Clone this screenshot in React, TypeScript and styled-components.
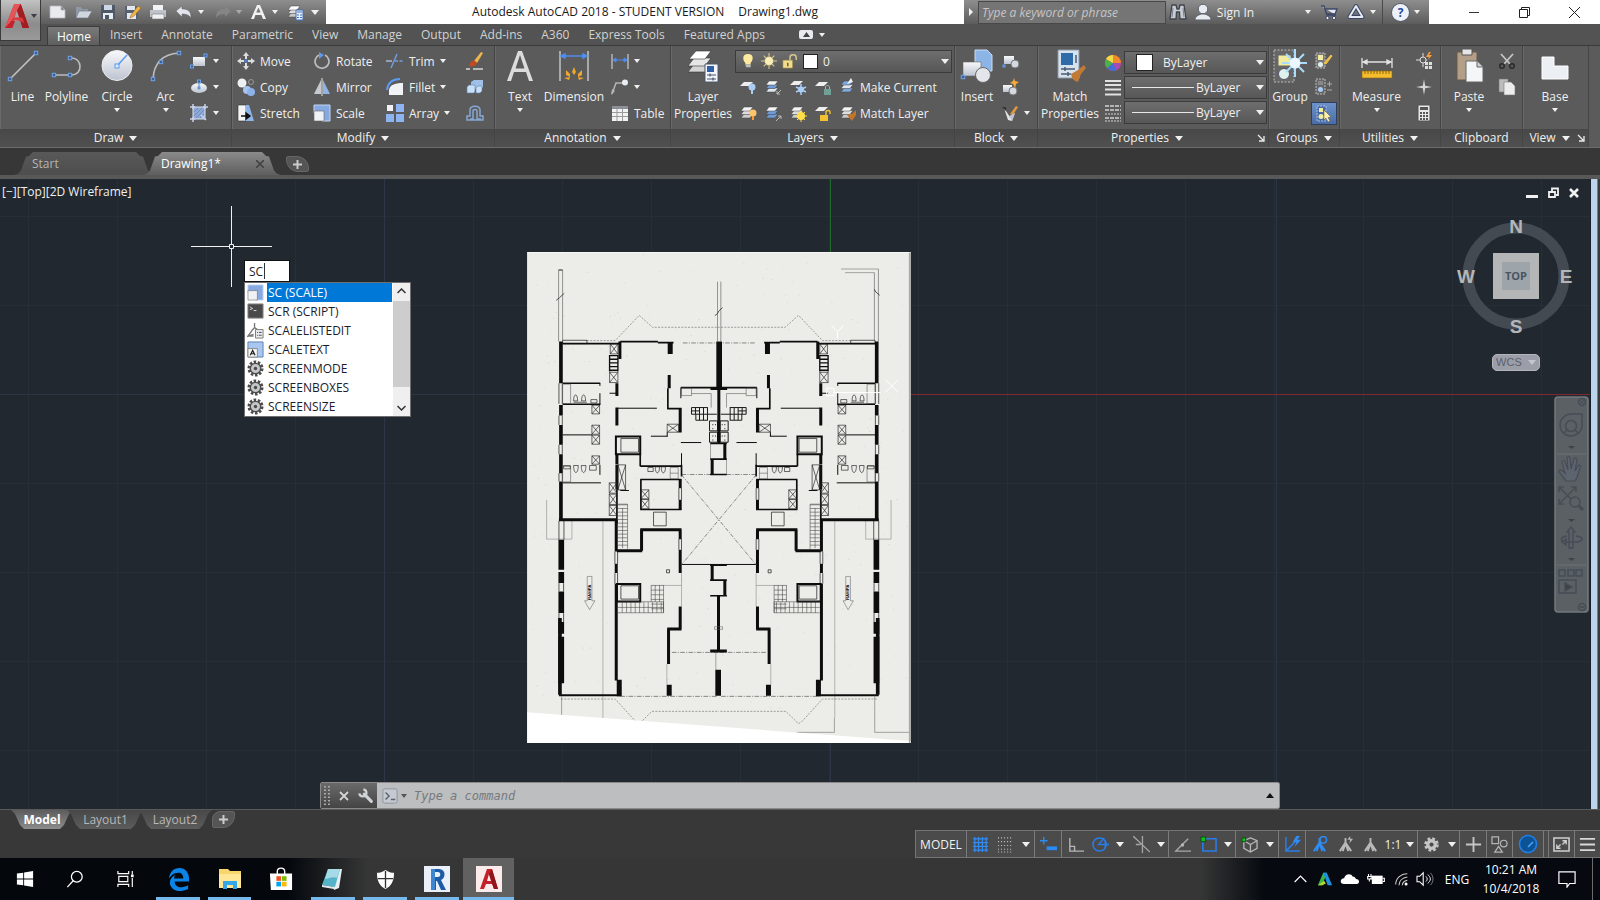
import React from "react";
import styled, { createGlobalStyle, css } from "styled-components";

const ui = `"Open Sans", "Noto Sans", "Segoe UI", sans-serif`;

const Global = createGlobalStyle`
  * { box-sizing: border-box; }
  body { margin: 0; background: #212830; font-family: ${ui}; font-size: 12px; color: #f0f0f0; }
  button, input, select { font: inherit; color: inherit; border: 0; background: none; padding: 0; margin: 0; border-radius: 0; }
  input { min-width: 0; outline: none; }
  svg { display: block; flex: none; }
`;

/* ---------- shared pieces ---------- */

const Caret = styled.span<{ $color?: string; $big?: boolean; $up?: boolean }>`
  width: 0;
  height: 0;
  flex: none;
  border: ${(p) => (p.$big || p.$up ? 4 : 3)}px solid transparent;
  ${(p) =>
    p.$up
      ? css`border-top: 0; border-bottom: 5px solid ${p.$color || "#f0f0f0"};`
      : css`border-bottom: 0; border-top: ${p.$big ? 5 : 4}px solid ${p.$color || "#f0f0f0"};`}
`;

const Page = styled.div`
  min-height: 100vh;
  display: flex;
  flex-direction: column;
  overflow: hidden;
`;
const Defs = styled.svg`
  position: absolute;
`;

type Art = { v: string; d: React.ReactNode };
const S = (v: string, d: React.ReactNode): Art => ({ v, d });

const stack = (a: string, b: string, c: string) => (
  <>
    <path d="M5 10h9l-3 4H2z" fill={c} stroke="#444" strokeWidth=".5" />
    <path d="M5 6.500h9l-3 4H2z" fill={b} stroke="#444" strokeWidth=".5" />
    <path d="M5 3h9l-3 4H2z" fill={a} stroke="#444" strokeWidth=".5" />
  </>
);
const node = (x: number, y: number, s = 3.4) => (
  <rect x={x - s / 2} y={y - s / 2} width={s} height={s} fill="#3f5f8f" stroke="#6fa3ee" />
);
const gear = (fill: string, hole: string) => (
  <>
    <circle cx="9" cy="9" r="7" fill="none" stroke={fill} strokeWidth="3" strokeDasharray="2.700 1.700" />
    <circle cx="9" cy="9" r="5.500" fill={hole} stroke={fill} strokeWidth="1.400" />
    <circle cx="9" cy="9" r="1.800" fill={fill} />
  </>
);
const person = (c: string) => <path d="M9 2v5M9 7L3 16M9 7l6 9M9 8l-3 8M9 8l3 8" stroke={c} strokeWidth="2" fill="none" />;

const art: Record<string, Art> = {
  logo: S("0 0 28 30", <><path d="M1 28L11 2h7l9 26h-7l-2-7-6-1-3 8z" fill="#c4232b" /><path d="M11 2h7l-8 16-9 10z" fill="#e4555a" /><path d="M14 9l4 12-8-1z" fill="#a9a9a9" /><path d="M18 2l9 26h-7L14 9z" fill="#a31c22" /><path d="M8 20c5-1 11 0 14 3l-2-6c-3-1-7-1-10 0z" fill="#d83a40" /></>),
  file: S("0 0 18 18", <path d="M1 3h11l4 4v8H1z M12 3v4h4" fill="#e9ebee" stroke="#b5b8bd" strokeWidth=".8" />),
  open: S("0 0 18 18", <><path d="M2 4h5l1 2h6v3H5l-3 6z" fill="#8f9aa8" /><path d="M5 8h13l-4 7H2z" fill="#d0d6de" stroke="#68707a" strokeWidth=".6" /></>),
  save: S("0 0 18 18", <><path d="M2 2h14v14H2z" fill="#4d5968" /><path d="M5 2h8v5H5z" fill="#cdd6e4" /><path d="M4 10h10v6H4z" fill="#e8edf4" /><path d="M6 12h4v4H6z" fill="#4d5968" /></>),
  saveas: S("0 0 18 18", <><path d="M1 3h13v13H1z" fill="#566272" /><path d="M3 3h8v4H3zM3 10h9v6H3z" fill="#e2e8f1" /><path d="M7 12l7-9 3 2-7 8-4 2z" fill="#f0b64a" stroke="#97601a" strokeWidth=".5" /></>),
  print: S("0 0 18 18", <><path d="M4 2h10v5H4z" fill="#f1f3f6" /><path d="M1 7h16v7H1z" fill="#bfc3c9" /><path d="M3 11h12v5H3z" fill="#eef0f3" stroke="#777" strokeWidth=".6" /></>),
  undo: S("0 0 18 18", <path d="M1 8l6-5v3c6 0 9 2 9 9-2-3-4-4-9-4v3z" fill="#e2e6ec" stroke="#666" strokeWidth=".5" />),
  redo: S("0 0 18 18", <path d="M17 8l-6-5v3c-6 0-9 2-9 9 2-3 4-4 9-4v3z" fill="#858585" />),
  bigA: S("0 0 18 18", <path d="M1 16L7 2h3l6 14h-3l-1.600-4H5.400L4 16zM6.200 9.500h4.400L8.500 4.600z" fill="#f1f1f1" />),
  sheets: S("0 0 18 18", <>{stack("#fff", "#ddd", "#c9c9c9")}<path d="M10 7h7v10h-7z" fill="#e8f0fb" stroke="#4371b5" /><path d="M11 9h5M11 12h2m1 0h2M11 14.500h2m1 0h2" stroke="#4371b5" /></>),
  binoc: S("0 0 18 18", <><path d="M3 2h4l1 4h2l1-4h4l2 14h-6l-.5-7h-3L7 16H1z" fill="#c8ccd3" stroke="#3f444c" strokeWidth="1.300" /><path d="M4 5l-1 9M14 5l1 9" stroke="#7a818d" /></>),
  user: S("0 0 18 18", <><circle cx="9" cy="6" r="4.800" fill="#e8ebf0" stroke="#59606c" /><path d="M1 17c0-4 4-5 6-6h4c2 1 6 2 6 6z" fill="#e8ebf0" stroke="#59606c" /></>),
  cart: S("0 0 18 18", <><path d="M1 3h3l3 9h9M5 6h12l-2 5H6.500z" fill="#e6eaf3" stroke="#3c4768" strokeWidth="1.300" /><circle cx="7.500" cy="15" r="1.600" fill="#fff" stroke="#3c4768" /><circle cx="14" cy="15" r="1.600" fill="#fff" stroke="#3c4768" /></>),
  a360: S("0 0 18 18", <><path d="M9 3l6.500 11h-13z" fill="none" stroke="#3c4768" strokeWidth="4" strokeLinejoin="round" /><path d="M9 3l6.500 11h-13z" fill="none" stroke="#e6eaf3" strokeWidth="2" strokeLinejoin="round" /></>),
  line: S("0 0 34 34", <><path d="M4 30L30 4" stroke="#c3c3c3" strokeWidth="1.600" />{node(4, 30)}{node(30, 4)}</>),
  polyline: S("0 0 34 34", <><path d="M4 26h17c13 0 11-18 0-17" stroke="#bdbdbd" strokeWidth="1.600" fill="none" />{node(4, 26)}{node(20, 26)}{node(20, 9)}</>),
  circle: S("0 0 34 34", <><circle cx="17" cy="16.500" r="15" fill="url(#ball)" stroke="#eceff4" /><path d="M17 17L27 6" stroke="#5b9bf2" strokeWidth="1.500" /><rect x="15" y="15" width="4" height="4" fill="#dfe9f8" stroke="#5b9bf2" /></>),
  arc: S("0 0 34 34", <><path d="M4 30C5 14 14 5 30 4" stroke="#bdbdbd" strokeWidth="1.600" fill="none" />{node(4, 30)}{node(12, 13)}{node(30, 4)}</>),
  rect: S("0 0 18 18", <><path d="M3 5h12v9H3z" fill="url(#ball)" />{node(15.500, 3.500, 3)}{node(2, 14.500, 3)}</>),
  ellipse: S("0 0 18 18", <><ellipse cx="9" cy="10" rx="8" ry="5" fill="url(#ball)" /><path d="M9 10V4" stroke="#4d84d6" />{node(9, 3.500, 3)}{node(9, 10, 2)}</>),
  hatch: S("0 0 18 18", <><path d="M3 3h12v12H3z" fill="#8fa9d6" stroke="#dce4f2" /><path d="M4 8l4-4M4 12l8-8M6 14l8-8M10 14l4-4" stroke="#6f8bbd" /><path d="M0 3h5M3 0v5M13 3h5M15 0v5M0 15h5M3 13v5M11 11l5 5" stroke="#c8d4ea" strokeWidth="1.500" /></>),
  move: S("0 0 18 18", <><path d="M9 0l3 4h-2v3H8V4H6zM9 18l-3-4h2v-3h2v3h2zM0 9l4-3v2h3v2H4v2zM18 9l-4 3v-2h-3V8h3V6z" fill="#dcdcdc" /><rect x="7.500" y="7.500" width="3" height="3" fill="#4d84d6" /></>),
  copy: S("0 0 18 18", <><circle cx="5" cy="5" r="4.500" fill="#eef0f4" /><circle cx="14" cy="4" r="2.500" fill="none" stroke="#999" /><circle cx="10" cy="12" r="4" fill="#a8c5ef" /><circle cx="14" cy="14" r="4" fill="#8db2e8" /></>),
  stretch: S("0 0 18 18", <><path d="M1 1h8v16H1z" fill="#f3f4f6" stroke="#333" strokeWidth=".6" /><path d="M9 1h3l5 16H9z" fill="#8db5e8" /><path d="M4 12h8M9 9l4 3-4 3z" stroke="#111" strokeWidth="1.400" /></>),
  rotate: S("0 0 18 18", <><path d="M12 3a7 7 0 1 1-6 0" fill="none" stroke="#b9bcc1" strokeWidth="1.800" /><path d="M6 0l5 3-5 4z" fill="#5f97ea" /></>),
  mirror: S("0 0 18 18", <><path d="M8 2v14H1z" fill="#c5c9d0" /><path d="M10 2v14h7z" fill="#8fb3e4" /><path d="M9 0v18" stroke="#e8e8e8" /></>),
  scale: S("0 0 18 18", <><path d="M1 1h16v16H9V9H1z" fill="#86a9e0" stroke="#c2d5f3" /><path d="M1 7h10v10H1z" fill="#f0f2f5" stroke="#666" strokeWidth=".6" /></>),
  trim: S("0 0 18 18", <><path d="M0 9h6" stroke="#a9b7cc" strokeWidth="1.500" /><path d="M9 9h9" stroke="#6fa0e8" strokeWidth="1.500" strokeDasharray="3 1.500" /><path d="M5 16L11 2" stroke="#6fa0e8" strokeWidth="1.400" /></>),
  fillet: S("0 0 18 18", <><path d="M3 17V12C4 7 8 5 17 5v12z" fill="#f0f2f5" /><path d="M1 12C2 4 7 1 14 1" fill="none" stroke="#5b9bf2" strokeWidth="2" /></>),
  array: S("0 0 18 18", <><path d="M1 1h6v6H1z" fill="#f0f2f5" /><path d="M10 0h8v8h-8zM0 10h8v8H0zM10 10h8v8h-8z" fill="#8db4f0" /></>),
  brush: S("0 0 18 18", <><path d="M8 9l7-9 2 1-6 10z" fill="#f0b64a" /><path d="M3 14c1-4 3-6 6-5l2 2c-1 3-4 4-8 3z" fill="#c24a20" /><path d="M0 17h4M7 17h10" stroke="#d8d8d8" strokeWidth="1.500" /></>),
  explode: S("0 0 18 18", <><path d="M5 4l3-2h9v7l-2 2H5z" fill="#9fc0e8" /><path d="M1 9l2-2h6v6l-1 2H1zM10 10l2-2h4v5l-2 2h-4z" fill="#c9dff6" stroke="#5b7fae" strokeWidth=".6" /></>),
  offset: S("0 0 18 18", <path d="M1 16h16v-4h-3V6c0-5-10-5-10 0v6H1zM4 15h3V7c0-2 4-2 4 0v8h4" fill="none" stroke="#87a7d3" strokeWidth="1.500" />),
  text: S("0 0 34 34", <path d="M4 32L15 2h4l11 30h-4l-3-9H11l-3 9zM12.500 19.500h9L17 6z" fill="#dcdcdc" />),
  dimension: S("0 0 34 34", <><path d="M3 2v30M31 2v30" stroke="#a9a9a9" strokeWidth="2" /><path d="M4 7h26M4 7l4-2v4zM30 7l-4-2v4z" stroke="#4f8df0" fill="#4f8df0" strokeWidth="1.500" /><path d="M17 18l2 5-2 3-2-3zM9 21l4 4v3l-4-2zM25 21l-4 4v3l4-2zM7 29l6-1-1 3zM27 29l-6-1 1 3z" fill="#f0a62c" /></>),
  dimsmall: S("0 0 18 18", <><path d="M1 2v15M17 2v15" stroke="#b5b5b5" strokeWidth="1.500" /><path d="M2 8h14M2 8l3-2v4zM16 8l-3-2v4z" stroke="#4f8df0" fill="#4f8df0" /></>),
  leader: S("0 0 18 18", <><path d="M1 16l4-11h8" stroke="#b5b5b5" strokeWidth="1.500" fill="none" /><path d="M0 17l1-6 3 2z" fill="#b5b5b5" /><circle cx="14" cy="4.500" r="3" fill="#e9edf4" /></>),
  table: S("0 0 18 18", <><path d="M1 2h16v15H1z" fill="#f2f2f2" /><path d="M1 2h16v3H1z" fill="#8d9096" /><path d="M1 8.500h16M1 12.500h16M6 5v12M11.500 5v12" stroke="#9a9a9a" /></>),
  layerprops: S("0 0 34 34", <><path d="M8 15h17l-6 8H2z" fill="#d4d4d4" stroke="#333" strokeWidth=".6" /><path d="M8 9h17l-6 8H2z" fill="#e6e6e6" stroke="#333" strokeWidth=".6" /><path d="M10 2h15l-6 8H3z" fill="#fff" stroke="#333" strokeWidth=".6" /><path d="M19 15h13v18H19z" fill="#f4f6f9" stroke="#4c5a70" /><path d="M21 17h7v6h-7z" fill="#2f5fa8" /><path d="M21 26h9M21 30h9M24 24.500v3M27 28.500v3" stroke="#44546e" strokeWidth="1.200" /></>),
  bulb: S("0 0 18 18", <><path d="M9 1c7 0 6 7 3 10v2H6v-2C3 8 2 1 9 1z" fill="#ffe9a0" /><path d="M6 13h6v3H7z" fill="#bdbdbd" /></>),
  sun: S("0 0 18 18", <><path d="M9 0v18M0 9h18M3 3l12 12M15 3L3 15" stroke="#d9c98e" strokeWidth="1.200" /><circle cx="9" cy="9" r="5" fill="#fbeeb8" stroke="#8b805c" strokeWidth=".6" /></>),
  lock: S("0 0 18 18", <><path d="M1 8h11v9H1z" fill="#f0dc8e" stroke="#8a7733" strokeWidth=".6" /><path d="M9 8V5c0-4 7-4 7 0v3" fill="none" stroke="#d9c98e" strokeWidth="1.600" /><path d="M6.500 11v4" stroke="#5d5020" strokeWidth="1.500" /></>),
  l1: S("0 0 18 18", <><path d="M5 4h9l-4 4H1z" fill="#eee" /><circle cx="13" cy="9" r="3.500" fill="#a9cdf5" /><path d="M13 12v4" stroke="#a9cdf5" strokeWidth="2" /></>),
  l2: S("0 0 18 18", <>{stack("#f4f4f4", "#6f9ad6", "#dfe5ee")}<path d="M17 12l-4 4M13 13v3h3" stroke="#bbb" fill="none" /></>),
  l3: S("0 0 18 18", <><path d="M5 3h9l-4 4H1z" fill="#eee" /><path d="M12 6v11M7 9l10 5M17 9L7 14" stroke="#a9cdf5" strokeWidth="1.500" /><circle cx="12" cy="11.500" r="3" fill="#a9cdf5" /></>),
  l4: S("0 0 18 18", <><path d="M5 4h9l-4 4H1z" fill="#eee" /><path d="M10 11h7v6h-7z" fill="#6f9f95" /><path d="M11.500 11V9c0-2 4-2 4 0v2" fill="none" stroke="#9dbab4" /></>),
  l5: S("0 0 18 18", <>{stack("#7fa8df", "#dfe5ee", "#7fa8df")}<path d="M12 0l2 4-6 2z" fill="#eef3fa" /></>),
  l6: S("0 0 18 18", <>{stack("#f4f4f4", "#ddd", "#ccc")}<circle cx="14" cy="9" r="3.500" fill="#ffc56a" /><path d="M14 12v4" stroke="#ff9a2e" strokeWidth="2" /></>),
  l7: S("0 0 18 18", <>{stack("#f4f4f4", "#6f9ad6", "#6f9ad6")}<path d="M12 17l5-5M14 12h3v3" stroke="#bbb" fill="none" /></>),
  l8: S("0 0 18 18", <>{stack("#f4f4f4", "#ddd", "#ccc")}<circle cx="12" cy="12" r="4" fill="#ffdf4a" /><path d="M12 6v12M6 12h12M8 8l8 8M16 8l-8 8" stroke="#ffdf4a" /></>),
  l9: S("0 0 18 18", <><path d="M5 3h9l-4 4H1z" fill="#eee" /><path d="M6 11h8v6H6z" fill="#f2c230" /><path d="M12 11V8c0-2 4-2 4 0v2" fill="none" stroke="#f2c230" strokeWidth="1.400" /></>),
  l10: S("0 0 18 18", <>{stack("#f4f4f4", "#ddd", "#ccc")}<path d="M8 11l5-1 4-4v5l-4 6z" fill="#c47427" /></>),
  insert: S("0 0 34 34", <><path d="M15 1h12l5 5v16H15z" fill="#8db4e6" stroke="#c8dcf5" /><path d="M3 13h18v14H3z" fill="url(#ball)" stroke="#666" strokeWidth=".6" /><circle cx="23" cy="26" r="7.500" fill="#e2e5ea" stroke="#666" />{node(3, 28)}</>),
  b1: S("0 0 18 18", <><path d="M3 4h10v8H3z" fill="url(#ball)" /><circle cx="14" cy="12" r="4" fill="#d4d8df" stroke="#777" />{node(3, 14, 2)}</>),
  b2: S("0 0 18 18", <><path d="M2 7h9v7H2z" fill="url(#ball)" /><circle cx="12" cy="13" r="4" fill="#d4d8df" stroke="#777" /><path d="M13 0l1 3 4 1-3 2-1 4-2-4-3-1 3-2z" fill="#f7a93b" /></>),
  b3: S("0 0 18 18", <><path d="M3 4l6 9 5-4-3 8-4-1z" fill="#e4e6ea" /><path d="M1 3h4v4z" fill="#333" /><path d="M9 10l6-8 2 1-5 8z" fill="#e09a3c" /><path d="M8 12l6-3-3 8z" fill="#bfc3c9" /></>),
  match: S("0 0 34 34", <><path d="M5 1h21v28H5z" fill="#d7e2ef" stroke="#8b97a6" /><path d="M8 4h12v12H8z" fill="#2f6ba8" /><path d="M8 20h14M8 25h10M12 18v4M15 23v4M23 6v8" stroke="#4b5b70" strokeWidth="1.500" /><path d="M18 25l7-4 6-5 2 3-5 6-3 8c-4-1-6-3-7-8z" fill="#c07a35" /></>),
  wheel: S("0 0 18 18", <><circle cx="9" cy="9" r="8" fill="#d44" /><path d="M9 9V1a8 8 0 0 1 8 8z" fill="#f08a2c" /><path d="M9 9h8a8 8 0 0 1-5 7.400z" fill="#a44bb5" /><path d="M9 9l3 7.400A8 8 0 0 1 3 14z" fill="#3e6fd9" /><path d="M9 9l-6 5A8 8 0 0 1 2 5z" fill="#46b34b" /><path d="M9 9L2 5a8 8 0 0 1 7-4z" fill="#f0dc4a" /></>),
  weights: S("0 0 18 18", <path d="M1 2h16M1 6h16M1 10.500h16M1 15.500h16" stroke="#e2e2e2" strokeWidth="2.200" />),
  types: S("0 0 18 18", <><path d="M1 2h16M1 6h16M1 14h16" stroke="#d2d2d2" strokeWidth="1.500" strokeDasharray="4 1" /><path d="M1 10h16M1 17h16" stroke="#d2d2d2" strokeDasharray="2 1" /></>),
  group: S("0 0 34 34", <><path d="M1 1h20v32H1z" fill="#666" stroke="#bbb" strokeDasharray="2 1.500" /><path d="M5 6h13v11H5z" fill="#f1eca0" stroke="#666" /><circle cx="11" cy="25" r="5.500" fill="#dff0ee" stroke="#556" /><path d="M22 0v28M9 14h25M13 5l18 18M31 5L13 23" stroke="#a9dcff" strokeWidth="2" /><circle cx="22" cy="14" r="5.500" fill="#eaf7ff" /></>),
  g1: S("0 0 18 18", <><path d="M1 1h9v15H1z" fill="#777" stroke="#bbb" strokeDasharray="2 1" /><path d="M3 3h5v5H3z" fill="#f1eca0" /><circle cx="5.500" cy="12.500" r="2.500" fill="#dff0ee" /><path d="M9 11l7-8 1 1-6 8z" fill="#f0c04a" stroke="#f0c04a" /></>),
  g2: S("0 0 18 18", <><path d="M1 1h9v15H1z" fill="#666" stroke="#bbb" strokeDasharray="2 1" /><path d="M3 3h5v4H3z" fill="#888" /><circle cx="5.500" cy="11.500" r="2.500" fill="#a9cdf5" /><path d="M12 6h5M14.500 3.500v5M12 12h5" stroke="#aaa" /></>),
  g3: S("0 0 18 18", <><path d="M2 1h9v15H2z" fill="#4b6ba5" stroke="#a9c1ea" strokeDasharray="2 1" /><path d="M4 3h4v4H4z" fill="#f1eca0" /><circle cx="6" cy="11.500" r="2.500" fill="#f1eca0" /><path d="M9 5l7 7-3 .5 2 3.500-2 1-2-4-2 2z" fill="#fff2a8" stroke="#555" strokeWidth=".5" /></>),
  measure: S("0 0 34 34", <><path d="M2 9v10M32 9v10M3 13h28M3 13l4-2v4zM31 13l-4-2v4z" stroke="#e2e2e2" strokeWidth="1.300" fill="#e2e2e2" /><path d="M2 22h30v7H2z" fill="#f5bd2d" stroke="#8d6712" strokeWidth=".6" /><path d="M5 22v3M8 22v3M11 22v3M14 22v3M17 22v3M20 22v3M23 22v3M26 22v3M29 22v3" stroke="#8d6712" /></>),
  u1: S("0 0 18 18", <><circle cx="8" cy="8" r="3" fill="none" stroke="#ddd" /><path d="M8 1v4M1 8h4M8 11v4M11 8h1" stroke="#ddd" /><path d="M10 10h7v7h-7z" fill="#ddd" /><path d="M10 13.500h7M13.500 10v7" stroke="#666" /><path d="M14 0l-3 5h3l-1 3 4-5h-3l2-3z" fill="#ff9b3a" /></>),
  u2: S("0 0 18 18", <path d="M9 1l1.200 6.800L17 9l-6.800 1.200L9 17l-1.200-6.800L1 9l6.800-1.200z" fill="#d5d5d5" />),
  u3: S("0 0 18 18", <><path d="M3 1h12v16H3z" fill="#e8e8e8" stroke="#555" /><path d="M5 3h8v3H5z" fill="#555" /><path d="M5 9h8M5 12h8M5 15h8" stroke="#555" strokeWidth="2" strokeDasharray="2 1" /></>),
  paste: S("0 0 34 34", <><path d="M5 3h20v28H5z" fill="#b39f88" stroke="#6a5a46" /><path d="M10 0h10v6H10z" fill="#e6e6e6" stroke="#555" /><path d="M14 12h11l6 6v15H14z" fill="#f4f6f8" stroke="#666" /><path d="M25 12v6h6" fill="#d0d0d0" stroke="#666" /></>),
  cut: S("0 0 18 18", <><path d="M3 2l9 10M15 2L6 12" stroke="#c5c5c5" strokeWidth="1.800" /><circle cx="4" cy="14" r="2.300" fill="none" stroke="#2a2a2a" strokeWidth="1.500" /><circle cx="14" cy="14" r="2.300" fill="none" stroke="#2a2a2a" strokeWidth="1.500" /></>),
  clip: S("0 0 18 18", <><path d="M1 1h9v13H1z" fill="#bcbcbc" stroke="#777" strokeWidth=".6" /><path d="M6 4h7l4 4v9H6z" fill="#ededed" stroke="#777" strokeWidth=".6" /></>),
  base: S("0 0 34 34", <path d="M4 8h12v9h14v13H4z" fill="#eceff3" stroke="#fff" />),
  script: S("0 0 18 18", <><path d="M1 1h16v15H1z" fill="#4a4a4a" stroke="#888" /><path d="M3 4l3 2-3 1M7 8h3" stroke="#ddd" fill="none" /></>),
  listedit: S("0 0 18 18", <><path d="M8 1v5M8 6L5 9M8 6l3 2M6 8L1 15l6-2M1 15h6" stroke="#777" strokeWidth="1.400" fill="none" /><path d="M9 8h8v9H9z" fill="#eee" stroke="#777" /><path d="M10.500 11h1M12.500 11h3M10.500 14h1M12.500 14h3" stroke="#345" /></>),
  scaletext: S("0 0 18 18", <><path d="M1 1h16v16H1z" fill="#a9c6ee" stroke="#5a7fb3" /><path d="M1 8h10v9H1z" fill="#f4f4f4" stroke="#888" /><path d="M3.500 15L6 10l2.500 5M4.500 13.500h3" stroke="#222" strokeWidth="1.300" fill="none" /></>),
  geardark: S("0 0 18 18", gear("#4c4c4c", "#c4c6c9")),
  gearlight: S("0 0 18 18", <><circle cx="9" cy="9" r="6.200" fill="none" stroke="#c4c4c4" strokeWidth="3" strokeDasharray="2.900 1.970" /><circle cx="9" cy="9" r="4" fill="none" stroke="#c4c4c4" strokeWidth="3.500" /></>),
  stGrid: S("0 0 18 18", <path d="M3 1v16M7 1v16M11 1v16M15 1v16M1 3h16M1 7h16M1 11h16M1 15h16" stroke="#2f8cf5" strokeWidth="1.300" />),
  stDots: S("0 0 18 18", <path d="M1 2h16M1 6h16M1 10h16M1 14h16M1 17h16" stroke="#b9b9b9" strokeWidth="1.200" strokeDasharray="1.200 2" />),
  stDyn: S("0 0 18 18", <><path d="M4 1v8M0 5h8" stroke="#2a8bf5" strokeWidth="1.500" /><path d="M7 11h11v4H7z" fill="#2a8bf5" /></>),
  stOrtho: S("0 0 18 18", <path d="M3 2v14h15M3 11h5v5" stroke="#b5b5b5" strokeWidth="1.500" fill="none" />),
  stPolar: S("0 0 18 18", <><circle cx="8" cy="9" r="7" fill="none" stroke="#2a7de8" strokeWidth="1.600" /><path d="M18 9H7l6-7M14 5v8" stroke="#2a7de8" fill="none" strokeWidth="1.500" /></>),
  stIso: S("0 0 18 18", <path d="M0 0l18 17M10 0v18M3 9h5" stroke="#a5a5a5" strokeWidth="1.400" />),
  stAngle: S("0 0 18 18", <><path d="M15 3L2 16h16" stroke="#a9a9a9" strokeWidth="1.500" fill="none" /><circle cx="9" cy="9.500" r="1.800" fill="#b5b5b5" /></>),
  stSnap: S("0 0 18 18", <><path d="M3 3h14v13H3z" stroke="#2a7de8" strokeWidth="1.600" fill="none" /><path d="M1 1h5v5H1z" fill="#10c01a" stroke="#0a4a10" /></>),
  stCube: S("0 0 18 18", <><path d="M10 2l7 3v8l-7 4-7-4V5zM3 5l7 4 7-4M10 9v8" stroke="#b5b5b5" strokeWidth="1.400" fill="none" /><path d="M1 2h4v4H1z" fill="#10c01a" stroke="#0a4a10" /></>),
  stUcs: S("0 0 18 18", <><path d="M2 1v15h15M2 16L11 7" stroke="#2a7de8" strokeWidth="1.600" fill="none" /><path d="M13 0l-4 7h4l-2 5 7-8h-4l3-4z" fill="#2f8cf5" /></>),
  stAnno1: S("0 0 18 18", <>{person("#2f8cf5")}<circle cx="13" cy="4" r="3.500" fill="none" stroke="#2f8cf5" strokeWidth="1.500" /></>),
  stAnno2: S("0 0 18 18", <>{person("#b9b9b9")}<path d="M14 0l-3 4h3l-1 4 4-5h-3z" fill="#b9b9b9" /></>),
  stAnno3: S("0 0 18 18", person("#b9b9b9")),
  stPlus: S("0 0 18 18", <path d="M9 1v16M1 9h16" stroke="#c5c5c5" strokeWidth="2" />),
  stShapes: S("0 0 18 18", <><path d="M1 1h7v7H1zM8 11l4 6H4z" fill="none" stroke="#b5b5b5" strokeWidth="1.300" /><circle cx="13.500" cy="8" r="3.500" fill="none" stroke="#b5b5b5" strokeWidth="1.300" /></>),
  stPerf: S("0 0 20 20", <><circle cx="10" cy="10" r="8.500" fill="#0b5394" stroke="#1f7fe8" strokeWidth="1.600" /><path d="M10 13l5-5" stroke="#49a6ff" strokeWidth="1.600" /></>),
  stFull: S("0 0 18 18", <><path d="M1 2h16v14H1z" fill="none" stroke="#d0d0d0" strokeWidth="1.600" /><path d="M10 5h4v4M14 5l-4 4M8 13H4V9M4 13l4-4" stroke="#d0d0d0" strokeWidth="1.400" fill="none" /></>),
  stMenu: S("0 0 18 18", <path d="M1 3h16M1 9h16M1 15h16" stroke="#d8d8d8" strokeWidth="2" />),
  wrench: S("0 0 18 18", <><path d="M7 7l8 8" stroke="#cfd2d6" strokeWidth="3.500" strokeLinecap="round" /><path d="M6 1.500A4 4 0 1 1 1.500 6" stroke="#cfd2d6" strokeWidth="2.600" fill="none" /></>),
  prompt: S("0 0 18 18", <><rect x="1" y="1" width="16" height="16" rx="2" fill="#c5cad1" stroke="#8790a0" /><path d="M4 5l4 4-4 4M10 13h5" stroke="#5a6474" strokeWidth="1.600" fill="none" /></>),
  win: S("0 0 20 20", <path d="M1 4l7-1v6.500H1zM9 2.800L19 1v8.500H9zM1 10.500h7V17l-7-1zM9 10.500h10V19l-10-1.800z" fill="#fff" />),
  search: S("0 0 20 20", <><circle cx="12" cy="7.500" r="6" fill="none" stroke="#fff" strokeWidth="1.400" /><path d="M8 12l-6.500 7" stroke="#fff" strokeWidth="1.400" /></>),
  tasks: S("0 0 20 20", <><path d="M1 1v3h12V1M1 19v-3h12v3M2 7h10v6H2zM17 1v4M17 9v10" fill="none" stroke="#fff" strokeWidth="1.300" /><path d="M15.500 5h3v3h-3z" fill="#fff" /></>),
  edge: S("0 0 24 24", <path d="M2 11C3 4 7 0 13 0c6 0 10 5 10 11v3H8c0 4 3 6 7 6 3 0 5-1 7-2v4c-2 1-5 2-8 2C7 24 3 20 3 15c0-3 2-6 6-8-1 1-1.500 2-1.500 4H17c0-4-2-6-5-6-5 0-8 3-10 6z" fill="#0b84e8" />),
  folder: S("0 0 24 24", <><path d="M1 2h9l2 2h11v17H1z" fill="#f9d66b" /><path d="M1 7h22v14H1z" fill="#ffe797" /><path d="M5 22v-8h14v8h-4v-4H9v4z" fill="#35a7e8" /></>),
  store: S("0 0 24 26", <><path d="M8 8V5c0-5 8-5 8 0v3" fill="none" stroke="#fff" strokeWidth="1.500" /><path d="M0 7h24v18H1z" fill="#fff" /><path d="M7 10h5v5H7z" fill="#f25022" /><path d="M13 10h5v5h-5z" fill="#7fba00" /><path d="M7 16h5v5H7z" fill="#00a4ef" /><path d="M13 16h5v5h-5z" fill="#ffb900" /></>),
  notepad: S("0 0 24 24", <><path d="M8 2l13 0-3 19-5 2z" fill="#e5eef2" /><path d="M7 2h12l-5 18L1 18z" fill="#55b3c9" /><path d="M7 2h12l-3 9C11 9 8 12 4 12z" fill="#a5dbe6" /><path d="M1 18l13 2-1 2-12-2z" fill="#dfe8ea" /></>),
  shield: S("0 0 20 20", <><path d="M10 0c3 2 6 3 9 3 0 9-3 14-9 17C4 17 1 12 1 3c3 0 6-1 9-3z" fill="#fff" /><path d="M10 1v18M2 9h16" stroke="#333" strokeWidth="1.400" /></>),
  revit: S("0 0 26 26", <><path d="M0 0h26v26H0z" fill="#e9f0f9" /><path d="M7 3h8c7 0 7 9 2 11l5 10h-5l-4-9h-1v9H7z" fill="#1c5ba8" /><path d="M11 6h3c3 0 3 5 0 5h-3z" fill="#e9f0f9" /><path d="M7 3h4v21H7z" fill="#3c86cf" /></>),
  acad: S("0 0 26 26", <><path d="M0 0h26v26H0z" fill="#fbeceb" /><path d="M4 23L11 3h5l6 20h-4l-2-5h-6l-2 5z" fill="#c4202a" /><path d="M13 8l2 7h-4z" fill="#fbeceb" /><path d="M16 3l6 20h-4L13 8z" fill="#8f151c" /></>),
  autodesk: S("0 0 18 18", <><path d="M1 16L7 2h4L6 16z" fill="#39b54a" /><path d="M7 2h4l6 14h-5z" fill="#1f8fe0" /><path d="M1 16l7-5 2 3-4 2z" fill="#b7d433" /></>),
  cloud: S("0 0 24 18", <path d="M5 15c-6 0-5-7 0-7 1-6 9-6 10-2 3 0 4 2 4 3 5 0 5 6 1 6z" fill="#fff" />),
  battery: S("0 0 24 18", <><path d="M7 5h13v10H7z" fill="#fff" /><path d="M5 8h1M20 8h2v4h-2M3 3v3M6 3v3M2 6h5v3H2zM4 9v3" stroke="#fff" strokeWidth="1.300" fill="none" /></>),
  wifi: S("0 0 18 18", <><path d="M2 15C2 8 8 2 16 2M6 16c0-5 4-9 10-10M10 16c0-3 2-5 6-6" stroke="#ccc" strokeWidth="1.300" fill="none" /><circle cx="14.500" cy="14.500" r="1.800" fill="#fff" /></>),
  volume: S("0 0 20 18", <><path d="M1 6h3l4-4v14l-4-4H1z" fill="none" stroke="#fff" strokeWidth="1.200" /><path d="M11 6c2 2 2 4 0 6M13 4c4 3 4 7 0 10" stroke="#fff" fill="none" /><path d="M16 2c4 4 4 10 0 14" stroke="#888" fill="none" /></>),
  note: S("0 0 20 20", <path d="M1 2h18v13h-6l-3 4v-4H1z" fill="none" stroke="#fff" strokeWidth="1.300" />),
  chev: S("0 0 18 18", <path d="M2 12l7-7 7 7" fill="none" stroke="#fff" strokeWidth="1.400" />),
};

function Ico({ n, s = 18, h }: { n: string; s?: number; h?: number }) {
  const a = art[n];
  return (
    <svg width={s} height={h || s} viewBox={a.v} aria-hidden="true">
      {a.d}
    </svg>
  );
}

/* ---------- title bar and ribbon tabs ---------- */

const Header = styled.header`
  display: flex;
  background: #535353;
`;
const AppButton = styled.button`
  width: 41px;
  height: 41px;
  flex: none;
  display: flex;
  align-items: center;
  gap: 1px;
  padding: 0 2px 8px 3px;
  background: linear-gradient(#c2c2c2, #8c8c8c 60%, #9a9a9a);
  border: 1px solid #3a3a3a;
  border-top: 0;
`;
const HeaderMain = styled.div`
  flex: 1;
  min-width: 0;
`;
const TitleBar = styled.div`
  height: 24px;
  display: flex;
  background: #fff;
`;
const barGradient = css`
  background: linear-gradient(#8e8e8e, #5c5c5c);
`;
const QuickAccess = styled.div`
  ${barGradient}
  width: 285px;
  flex: none;
  display: flex;
  align-items: center;
  padding-left: 8px;
`;
const QuickButton = styled.button<{ $w: number }>`
  width: ${(p) => p.$w}px;
  height: 24px;
  display: flex;
  align-items: center;
  flex: none;
`;
const WindowTitle = styled.h1`
  flex: 1;
  margin: 0;
  display: flex;
  justify-content: center;
  gap: 14px;
  font-size: 12px;
  line-height: 24px;
  font-weight: 400;
  color: #1a1a1a;
  white-space: nowrap;
`;
const InfoCenter = styled.div`
  ${barGradient}
  width: 465px;
  flex: none;
  display: flex;
  align-items: center;
  padding-left: 5px;
`;
const RightArrow = styled.span`
  border: 4px solid transparent;
  border-right: 0;
  border-left-color: #f2f2f2;
  margin-right: 5px;
`;
const SearchBox = styled.input`
  width: 188px;
  flex: none;
  height: 23px;
  && { padding: 0 3px; background: #757575; border: 1px solid #484848; }
  font-style: italic;
  &::placeholder { color: #c6c6c6; opacity: 1; }
`;
const InfoButton = styled.button<{ $w: number; $line?: boolean; $push?: boolean }>`
  width: ${(p) => p.$w}px;
  height: 24px;
  display: flex;
  flex: none;
  align-items: center;
  justify-content: center;
  gap: 5px;
  white-space: nowrap;
  margin-left: ${(p) => (p.$push ? "auto" : "0")};
  border-left: ${(p) => (p.$line ? "1px solid #4a4a4a" : "0")};
`;
const HelpMark = styled.span`
  width: 17px;
  height: 17px;
  line-height: 17px;
  border-radius: 50%;
  background: #eef2f8;
  color: #1f49a0;
  font-weight: 700;
  text-align: center;
  box-shadow: 0 0 0 1px #596273;
`;
const WindowButtons = styled.div`
  width: 171px;
  flex: none;
  display: flex;
  justify-content: space-around;
  align-items: center;
  padding-left: 20px;
  button { width: 40px; height: 24px; display: flex; align-items: center; justify-content: center; }
`;
const Tabs = styled.nav`
  display: flex;
  height: 21px;
  padding-left: 6px;
`;
const Tab = styled.button<{ $on?: boolean }>`
  padding: 0 ${(p) => (p.$on ? 8 : 10)}px 0 9px;
  margin-right: ${(p) => (p.$on ? 1 : 0)}px;
  margin-top: ${(p) => (p.$on ? 2 : 0)}px;
  line-height: ${(p) => (p.$on ? 17 : 21)}px;
  color: ${(p) => (p.$on ? "#fff" : "#d2d2d2")};
  white-space: nowrap;
  ${(p) =>
    p.$on &&
    css`
      background: linear-gradient(#7a7a7a, #5e5e5e);
      border: 1px solid #3c3c3c;
      border-bottom: 0;
      border-radius: 2px 2px 0 0;
    `}
`;
const RibbonToggle = styled.button`
  display: flex;
  align-items: center;
  gap: 6px;
  margin-left: 24px;
  span:first-child {
    width: 14px;
    height: 9px;
    border-radius: 2px;
    background: #e8eaee;
    display: flex;
    align-items: center;
    justify-content: center;
  }
  svg { margin: 0; }
`;

/* ---------- ribbon ---------- */

const Ribbon = styled.section`
  display: flex;
  height: 103px;
  background: #5b5b5b;
  border-top: 1px solid #3a3a3a;
  border-bottom: 1px solid #6b6b6b;
  overflow: hidden;
`;
const Panel = styled.section<{ $w: number }>`
  width: ${(p) => p.$w}px;
  flex: none;
  display: flex;
  flex-direction: column;
  border-right: 1px solid #454545;
  box-shadow: inset 1px 0 0 #696969;
`;
const PanelBody = styled.div<{ $pl: number }>`
  height: 83px;
  display: flex;
  padding: 2px 0 0 ${(p) => p.$pl}px;
`;
const PanelTitle = styled.button<{ $launch?: boolean }>`
  flex: 1;
  display: flex;
  align-items: center;
  justify-content: center;
  gap: 6px;
  line-height: 18px;
  && {
    background: linear-gradient(#484848, #505050);
    padding-right: ${(p) => (p.$launch ? 12 : 0)}px;
  }
  position: relative;
`;
const Launcher = styled.svg`
  position: absolute;
  right: 3px;
  top: 5px;
`;
const Big = styled.button<{ $w: number }>`
  width: ${(p) => p.$w}px;
  flex: none;
  display: flex;
  flex-direction: column;
  align-items: center;
  line-height: 17px;
  white-space: nowrap;
  svg { margin: 1px 0 5px; }
  ${Caret} { margin-top: 3px; }
`;
const Col = styled.div<{ $w?: number; $ml?: number; $mt?: number; $center?: boolean }>`
  width: ${(p) => (p.$w ? p.$w + "px" : "auto")};
  margin: ${(p) => p.$mt || 0}px 0 0 ${(p) => p.$ml || 0}px;
  flex: none;
  display: flex;
  flex-direction: column;
  align-items: ${(p) => (p.$center ? "center" : "flex-start")};
`;
const Small = styled.button<{ $on?: boolean }>`
  height: 26px;
  display: flex;
  align-items: center;
  gap: 5px;
  white-space: nowrap;
  ${(p) =>
    p.$on &&
    css`
      height: 23px;
      margin-top: 2px;
      padding: 0 3px;
      background: linear-gradient(#6d92c9, #4a6ca6);
      border: 1px solid #2f3f5c;
    `}
`;
const Row = styled.div`
  display: flex;
  align-items: center;
  height: 26px;
`;
const LayerTool = styled.button`
  width: 25px;
  height: 26px;
  display: flex;
  align-items: center;
  justify-content: center;
`;
const PropRow = styled.label`
  display: flex;
  align-items: center;
  gap: 2px;
  height: 25px;
`;
const Combo = styled.div<{ $w: number; $pl: number; $gap: number }>`
  width: ${(p) => p.$w}px;
  height: 23px;
  display: flex;
  align-items: center;
  gap: ${(p) => p.$gap}px;
  padding: 0 2px 0 ${(p) => p.$pl}px;
  background: linear-gradient(#6e6e6e, #575757);
  border: 1px solid #3b3b3b;
  select {
    flex: 1;
    min-width: 0;
    height: 21px;
    appearance: none;
    outline: none;
    option { background: #575757; }
  }
`;
const Swatch = styled.span<{ $s: number }>`
  width: ${(p) => p.$s}px;
  height: ${(p) => p.$s}px;
  background: #fff;
  border: 1px solid #222;
  flex: none;
`;
const LineSample = styled.span`
  width: 62px;
  height: 1px;
  background: #e8e8e8;
  flex: none;
`;

function BigButton({ n, label, w, arrow }: { n: string; label: string; w: number; arrow?: boolean }) {
  return (
    <Big $w={w}>
      <Ico n={n} s={34} />
      {label.split("|").map((t) => (
        <span key={t}>{t}</span>
      ))}
      {arrow && <Caret />}
    </Big>
  );
}
function SmallButton({ n, label, arrow, on }: { n: string; label?: string; arrow?: boolean; on?: boolean }) {
  return (
    <Small $on={on} aria-label={label || n} aria-pressed={on}>
      <Ico n={n} />
      {label}
      {arrow && <Caret />}
    </Small>
  );
}
function RibbonPanel(p: { w: number; pl: number; title: string; arrow?: boolean; launch?: boolean; children: React.ReactNode }) {
  return (
    <Panel $w={p.w}>
      <PanelBody $pl={p.pl}>{p.children}</PanelBody>
      <PanelTitle $launch={p.launch}>
        {p.title}
        {p.arrow !== false && <Caret $big />}
        {p.launch && (
          <Launcher width="8" height="8" viewBox="0 0 8 8">
            <path d="M1 1l5 5M7 2v5H2" stroke="#eee" strokeWidth="1.300" fill="none" />
          </Launcher>
        )}
      </PanelTitle>
    </Panel>
  );
}

/* ---------- file tabs ---------- */

const FileTabs = styled.nav`
  height: 31px;
  display: flex;
  align-items: flex-end;
  padding-left: 14px;
  background: #373737;
  border-bottom: 4px solid #585858;
`;
const FileTab = styled.div<{ $w: number; $on?: boolean }>`
  width: ${(p) => p.$w}px;
  height: 23px;
  margin-right: -12px;
  padding: 0 17px 0 18px;
  display: flex;
  align-items: center;
  justify-content: space-between;
  color: ${(p) => (p.$on ? "#fff" : "#b4b4b4")};
  background: ${(p) => (p.$on ? "linear-gradient(#8a8a8a, #5e5e5e)" : "linear-gradient(#595959, #4d4d4d)")};
  clip-path: polygon(0 100%, 4px 95%, 7px 80%, 12px 20%, 15px 4px, 19px 0, calc(100% - 19px) 0, calc(100% - 15px) 4px, calc(100% - 12px) 20%, calc(100% - 7px) 80%, calc(100% - 4px) 95%, 100% 100%);
`;
const AddTab = styled.button<{ $flip?: boolean }>`
  && {
    width: 23px;
    height: ${(p) => (p.$flip ? 17 : 16)}px;
    margin: ${(p) => (p.$flip ? "1px 0 0 6px" : "0 0 3px 17px")};
    border-radius: ${(p) => (p.$flip ? "8px 2px 12px 2px" : "2px 12px 2px 12px")};
    background: #555;
    border: 1px solid #666;
  }
  display: flex;
  align-items: center;
  justify-content: center;
`;
const Plus = () => (
  <svg width="9" height="9" viewBox="0 0 9 9">
    <path d="M4.500 0v9M0 4.500h9" stroke="#ccc" strokeWidth="2" />
  </svg>
);

/* ---------- model space ---------- */

const Space = styled.main`
  flex: 1;
  min-height: 630px;
  position: relative;
  overflow: hidden;
  background-color: #212830;
  background-image: linear-gradient(90deg, #2d3648 1px, transparent 1px), linear-gradient(#2d3545 1px, transparent 1px),
    linear-gradient(90deg, #262e38 1px, transparent 1px), linear-gradient(#262e38 1px, transparent 1px);
  background-size: 446px 100%, 100% 446px, 89px 89px, 89px 89px;
  background-position: 384px 0, 0 215px, 28px 0, 0 37px;
`;
const ViewLabels = styled.div`
  position: absolute;
  left: 2px;
  top: 4px;
  line-height: 18px;
`;
const AxisX = styled.div`
  position: absolute;
  left: 830px;
  right: 10px;
  top: 215px;
  height: 1px;
  background: #7d2a2d;
`;
const AxisY = styled.div`
  position: absolute;
  left: 830px;
  top: 0;
  height: 215px;
  width: 1px;
  background: #1f6b2c;
`;
const Paper = styled.svg`
  position: absolute;
  left: 527px;
  top: 73px;
`;
const Cross = styled.svg`
  position: absolute;
  left: 191px;
  top: 27px;
`;
const DynInput = styled.div`
  position: absolute;
  left: 244px;
  top: 81px;
  width: 46px;
  height: 22px;
  display: flex;
  align-items: center;
  padding-left: 4px;
  background: #fff;
  border: 1px solid #111;
  color: #222;
  input { width: 15px; height: 18px; }
  i { width: 1px; height: 16px; background: #333; }
`;
const Suggest = styled.div`
  position: absolute;
  left: 244px;
  top: 103px;
  width: 167px;
  display: flex;
  background: #fff;
  border: 1px solid #6f6f6f;
`;
const SuggestList = styled.ul`
  flex: 1;
  margin: 0;
  padding: 0;
  list-style: none;
  color: #1c1c2c;
`;
const SuggestItem = styled.li<{ $on?: boolean }>`
  height: 19px;
  display: flex;
  align-items: center;
  gap: 3px;
  padding-left: 2px;
  && button {
    flex: 1;
    text-align: left;
    height: 19px;
    padding-left: 1px;
    line-height: 19px;
    ${(p) => p.$on && css`background: #0078d7; color: #fff;`}
  }
`;
const Scroll = styled.div`
  width: 17px;
  margin-left: 1px;
  display: flex;
  flex-direction: column;
  align-items: center;
  justify-content: space-between;
  padding: 5px 0;
  background: linear-gradient(#efefef 18px, #cdcdcd 18px, #cdcdcd 104px, #efefef 104px);
`;
const DocButtons = styled.div`
  position: absolute;
  right: 20px;
  top: 8px;
  display: flex;
  gap: 9px;
`;
const ViewCube = styled.svg`
  position: absolute;
  right: 25px;
  top: 38px;
`;
const Wcs = styled.button`
  && {
    position: absolute;
    right: 60px;
    top: 175px;
    width: 48px;
    height: 17px;
    display: flex;
    align-items: center;
    justify-content: space-around;
    border-radius: 5px;
    background: #9b9ea9;
    border: 1px solid #b3b5bd;
    color: #5c5f69;
    font: 11px/15px "Liberation Sans", sans-serif;
  }
`;
const NavBar = styled.svg`
  position: absolute;
  right: 11px;
  top: 217px;
`;
const RightEdge = styled.div`
  position: absolute;
  right: 0;
  top: 0;
  bottom: 0;
  width: 10px;
  border-left: 1px solid #16202b;
  background: linear-gradient(90deg, #bcd3ec 6px, #10a8bd 6px, #10a8bd 7px, #3a3a3a 7px);
`;
const CommandLine = styled.div`
  position: absolute;
  left: 20%;
  right: 20%;
  bottom: 0;
  height: 27px;
  display: flex;
  border: 1px solid #8a8a8a;
  border-radius: 2px;
  overflow: hidden;
`;
const CommandGrip = styled.div`
  width: 56px;
  display: flex;
  align-items: center;
  justify-content: space-between;
  padding: 0 3px;
  background: linear-gradient(#6a6a6a, #444);
  button { display: flex; }
`;
const CommandField = styled.label`
  flex: 1;
  display: flex;
  align-items: center;
  gap: 3px;
  padding: 0 5px;
  background: #bcbec0;
  && input {
    flex: 1;
    height: 25px;
    padding-left: 4px;
    font: italic 12px "DejaVu Sans Mono", monospace;
    color: #333;
  }
  input::placeholder { color: #77797c; opacity: 1; }
`;

/* One half of the plan: the other half is its mirror image about x=596. */
const xbox = (x: number, y: number, w: number, h: number) => `M${x} ${y}h${w}v${h}h${-w}zl${w} ${h}M${x + w} ${y}l${-w} ${h}`;
const rungs = (x: number, y: number, w: number, n: number, step: number) =>
  Array.from({ length: n }, (_, i) => `M${x} ${y + i * step}h${w}`).join("");
const posts = (x: number, y: number, h: number, n: number, step: number) =>
  Array.from({ length: n }, (_, i) => `M${x + i * step} ${y}v${h}`).join("");

const HalfPlan = () => (
  <g id="half" fill="none" stroke="#0d0d0d">
    <path strokeWidth="1.500" stroke="#777" d="M248 830v590M79 765v118h76M155 828v55M484 985v100M430 1022h54M440 1258v62" />
    <path strokeWidth="1.800" stroke="#666" strokeDasharray="6 4" d="M200 287h85l72-76 40 36h199M122 1363h163l60 66 12 8 38-37h201" />
    <path strokeWidth="2" stroke="#555" strokeDasharray="14 4 3 4" d="M488 294h104M300 1355h290M455 1223h141M484 689h112" />
    <path strokeWidth="11" d="M122 290v125M122 480v32M122 540v60M122 628v57M122 710v118M119 1120v230" />
    <path strokeWidth="17" d="M123 885v90M123 982v33M123 1040v65M123 1132v35M123 1176v140" />
    <path strokeWidth="2" d="M116 415v62M126 415v62M116 512v28M126 512v28M116 600v28M126 600v28M116 685v25M126 685v25M116 828v57M131 828v57M116 1015v25M130 1015v25M116 1105v27M130 1105v27M127 286h73v10h-73z" />
    <path strokeWidth="5" d="M127 296h173M300 290h113M413 293h47M127 415h113M127 478h113M443 430v62M441 491h43M482 428h110M360 628v36M360 664h124M360 704h124M362 704v90M360 794h124M484 660v35M290 735v100" />
    <path strokeWidth="3" d="M127 570h88M127 714h115M239 415v8M239 445v35M239 660v30M293 490h117M392 574h51M441 562v12M482 593h61M482 428v32M484 625v40M300 737h26M484 959h112M268 445h22" />
    <path strokeWidth="9" d="M299 290v52M290 415v38M290 488v54M447 390v40M480 491v72M290 628v30M290 660v75M116 825h174M288 825v95M288 957v28M288 1017v290M290 918h76M364 855v63M360 855h124M480 855v28M480 915v70M480 1085v68M441 1153h43M445 1153v105M480 704v26M480 765v30" />
    <path strokeWidth="15" d="M450 292v35M297 1305v50M447 1320v33" />
    <path strokeWidth="6" d="M116 1352h184M287 575h73v53h-73z M290 1018h70v52h-70z" />
    <path strokeWidth="2" d="M302 581h53v41h-53zM302 1023h53v40h-53zM284 920v37M292 920v37M284 985v32M292 985v32M476 730v35M484 730v35M476 883v32M484 883v32M400 802h38v41h-38zM439 975h9v9h-9z" />
    <path
      strokeWidth="2"
      stroke="#222"
      d={[xbox(270, 297, 23, 30), xbox(268, 382, 25, 31), xbox(215, 481, 23, 26), xbox(215, 541, 23, 27), xbox(215, 571, 23, 27), xbox(215, 633, 23, 25), xbox(267, 714, 23, 31), xbox(267, 748, 23, 31), xbox(267, 782, 23, 30), xbox(441, 538, 34, 24), xbox(293, 660, 23, 75), xbox(362, 735, 24, 27), xbox(362, 764, 24, 28)].join("")}
    />
    <path strokeWidth="4" d={rungs(268, 332, 25, 5, 11) + "M268 330v50M293 330v50"} />
    <path strokeWidth="1.500" stroke="#333" d={rungs(293, 780, 29, 12, 11) + "M322 778v134M307 790v120M293 778h29"} />
    <path strokeWidth="1.500" stroke="#333" d={posts(306, 1072, 32, 10, 13) + rungs(393, 1022, 37, 6, 14) + "M293 1071h137v33H293M393 1021v50M405 1021v50M418 1021v50M430 1021v83M293 1088h137"} />
    <path strokeWidth="3" stroke="#1a1a1a" d={posts(514, 488, 20, 2, 12) + posts(538, 488, 38, 3, 12) + posts(527, 508, 18, 1, 12) + "M514 488h49M514 508h76M527 526h36M514 498h24M568 528h24v30h-24zM568 562h24v30h-24zM578 538v3M586 538v3M578 550v3M586 572v3M578 572v3M578 584v3"} />
    <path strokeWidth="1.500" stroke="#444" d="M127 418h24v58h-24zM484 429h30v23h-30zM514 446h59v42M127 665h24v46h-24zM450 668h24v34h-24zM450 685h24" />
    <path strokeWidth="2" stroke="#222" d="M160 468c0-24 12-24 12 0zM184 468c0-24 12-24 12 0zM212 464h18v10h-18zM160 662c0 28 14 28 14 0zM183 662c0 28 14 28 14 0zM208 662h20v14h-20zM383 668h16v12h-16zM405 666c0 24 13 24 13 0zM423 666c0 24 13 24 13 0zM160 472h40M130 662h20v10h-20z" />
  </g>
);

const speck = Array.from({ length: 260 }, (_, i) => {
  const x = 30 + ((i * 7919) % 1130);
  const y = 30 + ((i * 6101 + i * i * 13) % 1370);
  return `M${x} ${y}h${2 + (i % 3)}`;
}).join("");

function FloorPlan() {
  const ramp = (x: number) => (
    <g key={x} fill="none" stroke="#555" strokeWidth="1.500">
      <path d={`M${x - 7} 1068v-73h14v73h9l-16 27-15-27z`} />
      <text transform={`translate(${x + 4} 1066) rotate(-90)`} fontSize="13" fontWeight="700" fontFamily="Liberation Sans, sans-serif" fill="#111" stroke="none">
        RAMPA
      </text>
    </g>
  );
  return (
    <Paper width="384" height="491" viewBox="21 21 1151 1474" role="img" aria-label="Scanned floor plan">
      <rect x="21" y="21" width="1151" height="1474" fill="#ecede8" />
      <path d={speck} stroke="#9a9c96" strokeWidth="2" opacity=".35" />
      <HalfPlan />
      <use href="#half" transform="translate(1192 0) scale(-1 1)" />
      {ramp(208)}
      {ramp(984)}
      <g fill="none" stroke="#0d0d0d">
        <path strokeWidth="17" d="M597 290v137M594 1275v78" />
        <path strokeWidth="9" d="M571 431h50M596 431v164M614 595v48M576 643v47M576 961v46M614 1006v47M595 1053v166M570 1219h50" />
        <path strokeWidth="5" d="M570 596h50M570 643h50M570 689h50M570 961h50M570 1006h50M570 1053h50" />
        <path strokeWidth="2" stroke="#666" d="M115 290V75h12v215M592 290V110M602 290V110M1063 290V83M1075 290V72" />
        <path strokeWidth="2.500" stroke="#333" d="M108 166l10-8 4-4 10-9M584 212l8-6 4-8 11-10M1063 133l4 8 12 10M115 75h12" />
        <path strokeWidth="1.500" stroke="#555" d="M571 596v48M619 643v46M587 1220v55M583 1146h24v8h-24zM963 72h112M975 83h88M830 1463h113v-43M1064 1352v111h104M124 1355v60" />
        <path strokeWidth="2" stroke="#555" strokeDasharray="12 4 3 4" d="M484 690l224 270M708 690L484 960" />
      </g>
      <path d="M21 1403l1151 86v6H21z" fill="#fff" />
      <path d="M1169 21v1474" stroke="#a9abaa" strokeWidth="5" />
      <path d="M21 22h1151M22 21v1474" stroke="#fff" strokeWidth="2" />
      <path d="M934 241l18 20 18-20M952 261v20M1097 405l36 36M1133 405l-36 36M920 430h22v22h-22zM942 443h140" stroke="#fff" strokeWidth="3" fill="none" />
    </Paper>
  );
}

/* ---------- bottom bars ---------- */

const Bottom = styled.footer`
  background: #383838;
  border-top: 1px solid #5a5a5a;
`;
const LayoutTabs = styled.nav`
  height: 20px;
  display: flex;
  padding-left: 11px;
`;
const LayoutTab = styled.button<{ $w: number; $on?: boolean }>`
  && {
    width: ${(p) => p.$w}px;
    height: 19px;
    margin-right: -6px;
    line-height: 18px;
    color: ${(p) => (p.$on ? "#fff" : "#b8b8b8")};
    font-weight: ${(p) => (p.$on ? 700 : 400)};
    background: ${(p) => (p.$on ? "linear-gradient(#5c5c5c, #8c8c8c)" : "linear-gradient(#484848, #5c5c5c)")};
  }
  clip-path: polygon(0 0, 100% 0, calc(100% - 4px) 4px, calc(100% - 9px) 15px, calc(100% - 13px) 100%, 13px 100%, 9px 15px, 4px 4px);
`;
const StatusRow = styled.div`
  display: flex;
  justify-content: flex-end;
`;
const Status = styled.div`
  display: flex;
  height: 28px;
  background: #4b4b4b;
  border: 1px solid #747474;
  border-right: 0;
`;
const Cell = styled.button<{ $w: number; $line?: boolean }>`
  && { border-right: ${(p) => (p.$line ? "1px solid #7c7c7c" : "0")}; }
  width: ${(p) => p.$w}px;
  flex: none;
  display: flex;
  align-items: center;
  justify-content: center;
  white-space: nowrap;
`;
const Taskbar = styled.div`
  height: 42px;
  display: flex;
  justify-content: space-between;
  background: linear-gradient(90deg, #04080d 18%, #363636 23%, #363636 75%, #060a10 79%);
`;
const TaskGroup = styled.div`
  display: flex;
`;
const TaskButton = styled.button<{ $w: number; $open?: boolean; $on?: boolean }>`
  && {
    width: ${(p) => p.$w}px;
    height: 42px;
    background: ${(p) => (p.$on ? "#616161" : "none")};
    border: solid transparent;
    border-width: 0 ${(p) => (p.$on ? 0 : 4)}px;
  }
  display: flex;
  align-items: center;
  justify-content: center;
  position: relative;
  ${(p) =>
    p.$open &&
    css`
      &::after {
        content: "";
        position: absolute;
        left: 0;
        right: 0;
        bottom: 0;
        height: 3px;
        background: #76b9ed;
      }
    `}
`;
const Tray = styled.div`
  display: flex;
  align-items: center;
  padding-right: 4px;
`;
const TrayButton = styled.button<{ $w: number }>`
  width: ${(p) => p.$w}px;
  display: flex;
  align-items: center;
  justify-content: center;
  text-align: center;
  line-height: 19px;
  && { color: #fff; }
`;
const Desk = styled.span`
  height: 42px;
  border-right: 1px solid #6b6b6b;
`;

const statusCells: [string, number, boolean?][] = [
  ["stGrid", 27], ["stDots", 23], ["v", 18, true], ["stDyn", 27, true], ["stOrtho", 26], ["stPolar", 24], ["v", 16],
  ["stIso", 26], ["v", 15, true], ["stAngle", 27], ["stSnap", 25], ["v", 15, true], ["stCube", 26], ["v", 17, true],
  ["stUcs", 27, true], ["stAnno1", 27], ["stAnno2", 25], ["stAnno3", 25], ["1:1", 20], ["v", 15, true],
  ["gearlight", 27], ["v", 15, true], ["stPlus", 27, true], ["stShapes", 26, true], ["stPerf", 31, true],
  ["", 5, true], ["stFull", 26, true], ["stMenu", 25],
];

const suggestions = [
  ["scale", "SC (SCALE)"], ["script", "SCR (SCRIPT)"], ["listedit", "SCALELISTEDIT"], ["scaletext", "SCALETEXT"],
  ["geardark", "SCREENMODE"], ["geardark", "SCREENBOXES"], ["geardark", "SCREENSIZE"],
];

const quickTools: [string, number][] = [["file", 25], ["open", 25], ["save", 25], ["saveas", 25], ["print", 26], ["undo", 23]];
const ribbonTabs = ["Home", "Insert", "Annotate", "Parametric", "View", "Manage", "Output", "Add-ins", "A360", "Express Tools", "Featured Apps"];

export default function App() {
  return (
    <Page>
      <Global />
      <Defs width="0" height="0">
        <defs>
          <linearGradient id="ball" x1="0" y1="0" x2="0" y2="1">
            <stop offset="0" stopColor="#f8f9fb" />
            <stop offset="1" stopColor="#bcc3d0" />
          </linearGradient>
        </defs>
      </Defs>

      <Header>
        <AppButton aria-label="Application menu">
          <Ico n="logo" s={26} h={28} />
          <Caret $color="#3b3f47" />
        </AppButton>
        <HeaderMain>
          <TitleBar>
            <QuickAccess>
              {quickTools.map(([n, w]) => (
                <QuickButton key={n} $w={w} aria-label={n}><Ico n={n} /></QuickButton>
              ))}
              <QuickButton $w={16} aria-label="Undo list"><Caret /></QuickButton>
              <QuickButton $w={22} aria-label="redo"><Ico n="redo" /></QuickButton>
              <QuickButton $w={14} aria-label="Redo list"><Caret $color="#aaa" /></QuickButton>
              <QuickButton $w={22} aria-label="Text style"><Ico n="bigA" /></QuickButton>
              <QuickButton $w={14} aria-label="Style list"><Caret /></QuickButton>
              <QuickButton $w={25} aria-label="Sheet sets"><Ico n="sheets" /></QuickButton>
              <QuickButton $w={10} aria-label="Customize"><Caret $big /></QuickButton>
            </QuickAccess>
            <WindowTitle>
              <span>Autodesk AutoCAD 2018 - STUDENT VERSION</span>
              <span>Drawing1.dwg</span>
            </WindowTitle>
            <InfoCenter>
              <RightArrow />
              <SearchBox placeholder="Type a keyword or phrase" aria-label="Search" />
              <InfoButton $w={24} aria-label="Search"><Ico n="binoc" /></InfoButton>
              <InfoButton $w={68}><Ico n="user" />Sign In</InfoButton>
              <InfoButton $w={20} $push aria-label="Account list"><Caret /></InfoButton>
              <InfoButton $w={22} aria-label="Store"><Ico n="cart" /></InfoButton>
              <InfoButton $w={42} aria-label="A360"><Ico n="a360" /><Caret /></InfoButton>
              <InfoButton $w={47} $line aria-label="Help"><HelpMark>?</HelpMark><Caret /></InfoButton>
            </InfoCenter>
            <WindowButtons>
              <button aria-label="Minimize"><svg width="10" height="10"><path d="M0 5.500h10" stroke="#333" /></svg></button>
              <button aria-label="Restore"><svg width="11" height="11"><path d="M.5 2.500h8v8h-8zM2.500 2.500v-2h8v8h-2" stroke="#222" fill="none" /></svg></button>
              <button aria-label="Close"><svg width="11" height="11"><path d="M0 0l11 11M11 0L0 11" stroke="#222" /></svg></button>
            </WindowButtons>
          </TitleBar>
          <Tabs>
            {ribbonTabs.map((t, i) => (
              <Tab key={t} $on={i === 0}>{t}</Tab>
            ))}
            <RibbonToggle aria-label="Minimize ribbon">
              <span><svg width="7" height="5"><path d="M3.500 0L7 5H0z" fill="#444" /></svg></span>
              <Caret />
            </RibbonToggle>
          </Tabs>
        </HeaderMain>
      </Header>

      <Ribbon>
        <RibbonPanel w={232} pl={1} title="Draw">
          <BigButton n="line" label="Line" w={43} />
          <BigButton n="polyline" label="Polyline" w={45} />
          <BigButton n="circle" label="Circle" w={56} arrow />
          <BigButton n="arc" label="Arc" w={41} arrow />
          <Col $ml={4}>
            <SmallButton n="rect" arrow />
            <SmallButton n="ellipse" arrow />
            <SmallButton n="hatch" arrow />
          </Col>
        </RibbonPanel>
        <RibbonPanel w={263} pl={5} title="Modify">
          <Col $w={76}>
            <SmallButton n="move" label="Move" />
            <SmallButton n="copy" label="Copy" />
            <SmallButton n="stretch" label="Stretch" />
          </Col>
          <Col $w={73}>
            <SmallButton n="rotate" label="Rotate" />
            <SmallButton n="mirror" label="Mirror" />
            <SmallButton n="scale" label="Scale" />
          </Col>
          <Col $w={80}>
            <SmallButton n="trim" label="Trim" arrow />
            <SmallButton n="fillet" label="Fillet" arrow />
            <SmallButton n="array" label="Array" arrow />
          </Col>
          <Col>
            <SmallButton n="brush" />
            <SmallButton n="explode" />
            <SmallButton n="offset" />
          </Col>
        </RibbonPanel>
        <RibbonPanel w={176} pl={5} title="Annotation">
          <BigButton n="text" label="Text" w={40} arrow />
          <BigButton n="dimension" label="Dimension" w={68} />
          <Col $ml={3}>
            <SmallButton n="dimsmall" arrow />
            <SmallButton n="leader" arrow />
            <SmallButton n="table" label="Table" />
          </Col>
        </RibbonPanel>
        <RibbonPanel w={284} pl={2} title="Layers">
          <BigButton n="layerprops" label="Layer|Properties" w={60} />
          <Col $ml={2}>
            <Row>
              <Combo $w={217} $pl={4} $gap={5}>
                <Ico n="bulb" s={16} />
                <Ico n="sun" s={16} />
                <Ico n="lock" s={16} />
                <Swatch $s={15} />
                <select aria-label="Layer"><option>0</option></select>
                <Caret $big />
              </Combo>
            </Row>
            <Row>
              {["l1", "l2", "l3", "l4", "l5"].map((n) => <LayerTool key={n} aria-label={n}><Ico n={n} /></LayerTool>)}
              <Small>Make Current</Small>
            </Row>
            <Row>
              {["l6", "l7", "l8", "l9", "l10"].map((n) => <LayerTool key={n} aria-label={n}><Ico n={n} /></LayerTool>)}
              <Small>Match Layer</Small>
            </Row>
          </Col>
        </RibbonPanel>
        <RibbonPanel w={83} pl={1} title="Block">
          <BigButton n="insert" label="Insert" w={42} />
          <Col $ml={3}>
            <SmallButton n="b1" />
            <SmallButton n="b2" />
            <SmallButton n="b3" arrow />
          </Col>
        </RibbonPanel>
        <RibbonPanel w={231} pl={1} title="Properties" launch>
          <BigButton n="match" label="Match|Properties" w={62} />
          <Col $ml={3} $mt={2}>
            <PropRow>
              <Ico n="wheel" />
              <Combo $w={143} $pl={11} $gap={10}><Swatch $s={17} /><select aria-label="Color"><option>ByLayer</option></select><Caret $big /></Combo>
            </PropRow>
            <PropRow>
              <Ico n="weights" />
              <Combo $w={143} $pl={7} $gap={2}><LineSample /><select aria-label="Lineweight"><option>ByLayer</option></select><Caret $big /></Combo>
            </PropRow>
            <PropRow>
              <Ico n="types" />
              <Combo $w={143} $pl={7} $gap={2}><LineSample /><select aria-label="Linetype"><option>ByLayer</option></select><Caret $big /></Combo>
            </PropRow>
          </Col>
        </RibbonPanel>
        <RibbonPanel w={71} pl={1} title="Groups">
          <BigButton n="group" label="Group" w={40} />
          <Col $w={28} $center>
            <SmallButton n="g1" />
            <SmallButton n="g2" />
            <SmallButton n="g3" on />
          </Col>
        </RibbonPanel>
        <RibbonPanel w={101} pl={1} title="Utilities">
          <BigButton n="measure" label="Measure" w={71} arrow />
          <Col $ml={3}>
            <SmallButton n="u1" />
            <SmallButton n="u2" />
            <SmallButton n="u3" />
          </Col>
        </RibbonPanel>
        <RibbonPanel w={82} pl={1} title="Clipboard" arrow={false}>
          <BigButton n="paste" label="Paste" w={54} arrow />
          <Col $ml={2}>
            <SmallButton n="cut" />
            <SmallButton n="clip" />
          </Col>
        </RibbonPanel>
        <RibbonPanel w={66} pl={1} title="View" launch>
          <BigButton n="base" label="Base" w={62} arrow />
        </RibbonPanel>
      </Ribbon>

      <FileTabs>
        <FileTab $w={141}>Start</FileTab>
        <FileTab $w={138} $on>
          Drawing1*
          <svg width="8" height="8" viewBox="0 0 8 8"><path d="M0 0l8 8M8 0L0 8" stroke="#444" strokeWidth="1.600" /></svg>
        </FileTab>
        <AddTab aria-label="New drawing"><Plus /></AddTab>
      </FileTabs>

      <Space>
        <AxisX />
        <AxisY />
        <ViewLabels>
          <button>[−]</button><button>[Top]</button><button>[2D Wireframe]</button>
        </ViewLabels>
        <FloorPlan />
        <Cross width="81" height="81" viewBox="0 0 81 81">
          <path d="M0 40.500h38M43 40.500h38M40.500 0v38M40.500 43v38M38.500 38.500h4v4h-4z" stroke="#f0f0f0" fill="none" />
        </Cross>
        <DynInput>
          <input defaultValue="SC" aria-label="Dynamic command input" />
          <i />
        </DynInput>
        <Suggest>
          <SuggestList>
            {suggestions.map(([n, t], i) => (
              <SuggestItem key={t} $on={i === 0}>
                <Ico n={n} s={17} />
                <button>{t}</button>
              </SuggestItem>
            ))}
          </SuggestList>
          <Scroll>
            <svg width="9" height="6"><path d="M.5 5L4.500 1l4 4" stroke="#333" strokeWidth="1.500" fill="none" /></svg>
            <svg width="9" height="6"><path d="M.5 1l4 4 4-4" stroke="#333" strokeWidth="1.500" fill="none" /></svg>
          </Scroll>
        </Suggest>

        <DocButtons>
          <button aria-label="Minimize drawing"><svg width="12" height="12"><path d="M0 9.500h12" stroke="#f0f0f0" strokeWidth="3" /></svg></button>
          <button aria-label="Restore drawing"><svg width="12" height="12"><path d="M2 5h6v5H2zM5 4V1.500h6V8H9" stroke="#f0f0f0" strokeWidth="1.800" fill="none" /></svg></button>
          <button aria-label="Close drawing"><svg width="12" height="12"><path d="M2 2l8 8M10 2l-8 8" stroke="#f0f0f0" strokeWidth="2.600" /></svg></button>
        </DocButtons>
        <ViewCube width="118" height="120" viewBox="0 0 118 120" fontFamily="Liberation Sans, sans-serif" fontWeight="700" fontSize="19" fill="#b4b6b8" textAnchor="middle">
          <circle cx="59" cy="59" r="48" fill="none" stroke="#444a52" strokeWidth="11" />
          <text x="59" y="16">N</text>
          <text x="59" y="116">S</text>
          <text x="9" y="66">W</text>
          <text x="109" y="66">E</text>
          <path d="M36 36h46v46H36z" fill="#b3b5b7" />
          <path d="M45 45h28v28H45z" fill="#9da4aa" />
          <text x="59" y="63" fontSize="11" fill="#4b545f" fontFamily="Open Sans, sans-serif">TOP</text>
        </ViewCube>
        <Wcs>WCS <Caret $color="#c4c6cd" $big /></Wcs>
        <NavBar width="35" height="217" viewBox="0 0 35 217" fill="none" stroke="#474c55" strokeWidth="1.500">
          <rect x="1" y="1" width="33" height="215" rx="3" fill="#5b6065" stroke="#74787c" />
          <circle cx="28" cy="6" r="3.500" /><path d="M26 4l4 4M30 4l-4 4" strokeWidth="1" />
          <path d="M17 18h11v12a11 11 0 1 1-11-12z" /><circle cx="17" cy="30" r="5.500" /><path d="M13 34l-3 3M21 34l3 3" />
          <path d="M14 50h7l-3.500 3zM14 123h7l-3.500 3zM14 162h7l-3.500 3z" fill="#3d4249" stroke="none" />
          <path d="M3 58h29M3 169h29" stroke="#686c71" />
          <path d="M12 85c-2-4-7-8-7-10s3-1 6 2l-3-11c0-2 2-2 3 0l3 8-1-12c0-2 3-2 3 0l1 11 3-10c1-2 3-1 3 1l-2 11 3-5c2-2 3 0 2 2-2 6-2 9-5 13z" fill="#5e6370" strokeWidth="1.200" />
          <path d="M5 91l17 17M22 91L5 108M5 96v-5h5M17 91h5v5M5 103v5h5" /><circle cx="21" cy="106" r="5" fill="#5b6065" /><path d="M25 110l4 4" strokeWidth="3" />
          <path d="M17 131l4 5h-2v16h-4v-16h-2z" /><path d="M13 140c-7 1-8 5 0 6l11 0c6-2 6-5-2-6M8 146l4-3v6z" />
          <path d="M5 174h6v6H5zM14 174h6v6h-6zM22 174h6v6h-6zM5 184h17v13H5z" /><path d="M11 187l7 4-7 4z" fill="#3d4249" />
          <circle cx="28" cy="211" r="3.500" /><path d="M26 211h4" />
        </NavBar>
        <RightEdge />
        <CommandLine>
          <CommandGrip>
            <svg width="6" height="19" viewBox="0 0 6 19"><path d="M1 0v19M5 0v19" stroke="#aaa" strokeWidth="2" strokeDasharray="1.500 2" /></svg>
            <button aria-label="Close command line"><svg width="10" height="10" viewBox="0 0 10 10"><path d="M1 1l8 8M9 1L1 9" stroke="#d5d5d5" strokeWidth="1.800" /></svg></button>
            <button aria-label="Customize command line"><Ico n="wrench" s={16} /></button>
          </CommandGrip>
          <CommandField>
            <Ico n="prompt" s={16} />
            <Caret $color="#555" />
            <input placeholder="Type a command" aria-label="Command" />
            <Caret $up $color="#111" />
          </CommandField>
        </CommandLine>
      </Space>

      <Bottom>
        <LayoutTabs>
          <LayoutTab $w={62} $on>Model</LayoutTab>
          <LayoutTab $w={77}>Layout1</LayoutTab>
          <LayoutTab $w={74}>Layout2</LayoutTab>
          <AddTab $flip aria-label="New layout"><Plus /></AddTab>
        </LayoutTabs>
        <StatusRow>
          <Status>
            <Cell $w={51} $line>MODEL</Cell>
            {statusCells.map(([n, w, line], i) => (
              <Cell key={i} $w={w} $line={line} aria-label={n}>
                {n === "v" ? <Caret $big /> : n === "1:1" ? "1:1" : n ? <Ico n={n} s={n === "stPerf" ? 20 : 17} /> : null}
              </Cell>
            ))}
          </Status>
        </StatusRow>
        <Taskbar>
          <TaskGroup>
            <TaskButton $w={50} aria-label="Start"><Ico n="win" /></TaskButton>
            <TaskButton $w={50} aria-label="Search"><Ico n="search" /></TaskButton>
            <TaskButton $w={52} aria-label="Task view"><Ico n="tasks" /></TaskButton>
            <TaskButton $w={52} $open aria-label="Edge"><Ico n="edge" s={23} /></TaskButton>
            <TaskButton $w={51} $open aria-label="Explorer"><Ico n="folder" s={24} /></TaskButton>
            <TaskButton $w={52} aria-label="Store"><Ico n="store" s={24} /></TaskButton>
            <TaskButton $w={52} $open aria-label="Notepad"><Ico n="notepad" s={24} /></TaskButton>
            <TaskButton $w={52} $open aria-label="Security"><Ico n="shield" s={19} /></TaskButton>
            <TaskButton $w={52} $open aria-label="Revit"><Ico n="revit" s={26} /></TaskButton>
            <TaskButton $w={51} $open $on aria-label="AutoCAD"><Ico n="acad" s={26} /></TaskButton>
          </TaskGroup>
          <Tray>
            <TrayButton $w={24} aria-label="Hidden icons"><Ico n="chev" s={15} /></TrayButton>
            <TrayButton $w={25} aria-label="Autodesk"><Ico n="autodesk" s={16} /></TrayButton>
            <TrayButton $w={26} aria-label="OneDrive"><Ico n="cloud" s={20} h={16} /></TrayButton>
            <TrayButton $w={26} aria-label="Battery"><Ico n="battery" s={20} h={16} /></TrayButton>
            <TrayButton $w={24} aria-label="Wi-Fi"><Ico n="wifi" s={15} /></TrayButton>
            <TrayButton $w={24} aria-label="Volume"><Ico n="volume" s={18} h={16} /></TrayButton>
            <TrayButton $w={40}>ENG</TrayButton>
            <TrayButton $w={68}>10:21 AM<br />10/4/2018</TrayButton>
            <TrayButton $w={44} aria-label="Notifications"><Ico n="note" s={18} /></TrayButton>
            <TrayButton $w={7} aria-label="Show desktop"><Desk /></TrayButton>
          </Tray>
        </Taskbar>
      </Bottom>
    </Page>
  );
}
